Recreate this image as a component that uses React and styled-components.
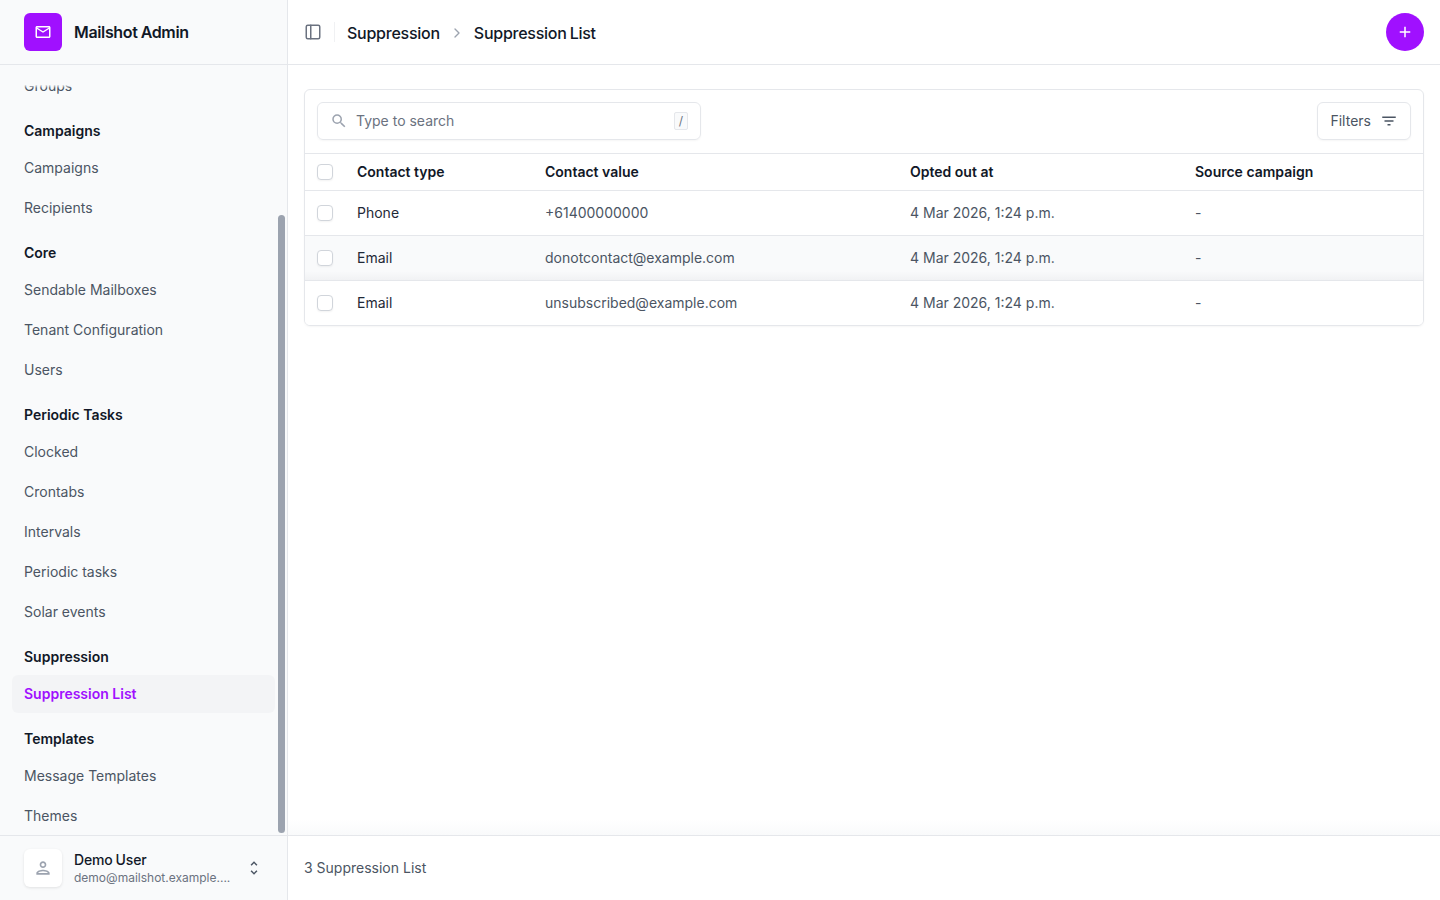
import styled, { createGlobalStyle } from "styled-components"
import { PanelLeft, ChevronRight } from "lucide-react"
import { MdAdd, MdFilterList, MdOutlineMail, MdOutlinePerson, MdSearch, MdUnfoldMore } from "react-icons/md"

const sections = [
  { title: "Campaigns", items: ["Campaigns", "Recipients"] },
  { title: "Core", items: ["Sendable Mailboxes", "Tenant Configuration", "Users"] },
  { title: "Periodic Tasks", items: ["Clocked", "Crontabs", "Intervals", "Periodic tasks", "Solar events"] },
  { title: "Suppression", items: ["Suppression List"] },
  { title: "Templates", items: ["Message Templates", "Themes"] },
]

const rows = [
  { type: "Phone", value: "+61400000000", at: "4 Mar 2026, 1:24 p.m.", source: "-" },
  { type: "Email", value: "donotcontact@example.com", at: "4 Mar 2026, 1:24 p.m.", source: "-", hovered: true },
  { type: "Email", value: "unsubscribed@example.com", at: "4 Mar 2026, 1:24 p.m.", source: "-" },
]

const GlobalStyle = createGlobalStyle`
  * { box-sizing: border-box; }
  html, body { margin: 0; height: 100%; }
  body {
    font-family: Inter, "Liberation Sans", sans-serif;
    font-size: 14px;
    line-height: 20px;
    color: #111827;
    background: #fff;
    overflow: hidden;
  }
`

const Page = styled.div`
  display: flex;
  height: 900px;
`
const Sidebar = styled.aside`
  position: relative;
  width: 288px;
  flex: none;
  display: flex;
  flex-direction: column;
  background: #f9fafb;
  border-right: 1px solid #e5e7eb;
`
const Brand = styled.div`
  height: 65px;
  flex: none;
  display: flex;
  align-items: center;
  gap: 12px;
  padding: 0 24px;
  border-bottom: 1px solid #e5e7eb;
  font-size: 16px;
  line-height: 24px;
  font-weight: 600;
  letter-spacing: -0.35px;
  word-spacing: -0.5px;
`
const LogoBox = styled.div`
  width: 38px;
  height: 38px;
  border-radius: 6px;
  background: #a010ff;
  color: #fff;
  display: flex;
  align-items: center;
  justify-content: center;
`
const NavScroll = styled.nav`
  position: relative;
  flex: 1;
  min-height: 0;
  overflow: hidden;
`
const NavList = styled.div`
  display: flex;
  flex-direction: column;
  gap: 16px;
  padding: 2px 12px 0;
`
const NavSection = styled.div`
  display: flex;
  flex-direction: column;
  gap: 8px;
`
const NavHeading = styled.div`
  padding: 0 12px;
  font-size: 14px;
  font-weight: 600;
  color: #111827;
`
const NavItems = styled.div`
  display: flex;
  flex-direction: column;
  gap: 2px;
`
const NavItem = styled.a`
  height: 38px;
  width: 263px;
  display: flex;
  align-items: center;
  padding: 0 12px;
  border-radius: 6px;
  font-size: 14px;
  color: ${p => (p.$active ? "#a010ff" : "#4b5563")};
  font-weight: ${p => (p.$active ? 600 : 400)};
  background: ${p => (p.$active ? "#f3f4f6" : "transparent")};
`
const TopFade = styled.div`
  position: absolute;
  top: 0;
  left: 0;
  right: 0;
  height: 23px;
  background: linear-gradient(to bottom, #f9fafb 85%, rgba(249, 250, 251, 0));
`
const Thumb = styled.div`
  position: absolute;
  top: 150px;
  right: 2px;
  width: 7px;
  height: 618px;
  border-radius: 4px;
  background: #9ca3af;
`
const UserBar = styled.div`
  height: 65px;
  flex: none;
  display: flex;
  align-items: center;
  gap: 12px;
  padding: 0 24px;
  border-top: 1px solid #e5e7eb;
`
const Avatar = styled.div`
  width: 38px;
  height: 38px;
  flex: none;
  border-radius: 6px;
  background: #fff;
  box-shadow: 0 1px 3px rgba(0, 0, 0, 0.1);
  color: #9ca3af;
  display: flex;
  align-items: center;
  justify-content: center;
`
const UserText = styled.div`
  flex: 1;
  min-width: 0;
`
const UserName = styled.div`
  font-size: 14px;
  line-height: 20px;
  font-weight: 500;
  letter-spacing: -0.15px;
  word-spacing: -0.6px;
  color: #111827;
`
const UserMail = styled.div`
  font-size: 12px;
  line-height: 16px;
  color: #6b7280;
  white-space: nowrap;
`
const Main = styled.main`
  flex: 1;
  min-width: 0;
  display: flex;
  flex-direction: column;
`
const TopBar = styled.header`
  height: 65px;
  flex: none;
  display: flex;
  align-items: center;
  padding: 0 16px;
  border-bottom: 1px solid #e5e7eb;
`
const PanelToggle = styled.div`
  display: flex;
  align-items: center;
  color: #6b7280;
  padding-right: 12px;
  margin-right: 12px;
  border-right: 1px solid #f0f1f3;
  height: 20px;
`
const Crumbs = styled.div`
  display: flex;
  align-items: center;
  gap: 9px;
  padding-top: 2px;
  font-size: 16px;
  line-height: 24px;
  font-weight: 500;
  letter-spacing: -0.25px;
  word-spacing: -1px;
  flex: 1;
  color: #111827;
`
const AddButton = styled.div`
  width: 38px;
  height: 38px;
  border-radius: 50%;
  background: #a010ff;
  color: #fff;
  display: flex;
  align-items: center;
  justify-content: center;
`
const Content = styled.div`
  position: relative;
  flex: 1;
  min-height: 0;
  padding: 24px 16px;
`
const BottomFade = styled.div`
  position: absolute;
  left: 0;
  right: 0;
  bottom: 0;
  height: 16px;
  background: linear-gradient(to bottom, rgba(249, 250, 251, 0), #f9fafb);
`
const Card = styled.section`
  border: 1px solid #e5e7eb;
  border-radius: 6px;
  box-shadow: 0 1px 2px rgba(0, 0, 0, 0.04);
  overflow: hidden;
`
const Toolbar = styled.div`
  display: flex;
  justify-content: space-between;
  align-items: center;
  height: 64px;
  padding: 12px 12px 13px;
  border-bottom: 1px solid #e5e7eb;
`
const SearchBox = styled.div`
  width: 384px;
  height: 38px;
  display: flex;
  align-items: center;
  gap: 8px;
  padding: 0 12px;
  border: 1px solid #e5e7eb;
  border-radius: 6px;
  box-shadow: 0 1px 2px rgba(0, 0, 0, 0.04);
  color: #9ca3af;
`
const Placeholder = styled.span`
  flex: 1;
  color: #6b7280;
  font-size: 14px;
`
const Kbd = styled.span`
  width: 14px;
  height: 18px;
  border: 1px solid #e5e7eb;
  border-radius: 2px;
  background: #f9fafb;
  color: #6b7280;
  font-size: 12px;
  display: flex;
  align-items: center;
  justify-content: center;
`
const FilterButton = styled.div`
  height: 38px;
  display: flex;
  align-items: center;
  gap: 9px;
  padding: 0 12px;
  border: 1px solid #e5e7eb;
  border-radius: 6px;
  box-shadow: 0 1px 2px rgba(0, 0, 0, 0.04);
  color: #4b5563;
  font-size: 14px;
`
const Table = styled.div`
  display: flex;
  flex-direction: column;
`
const Row = styled.div`
  display: grid;
  grid-template-columns: 52px 188px 365px 285px 1fr;
  align-items: center;
  height: ${p => (p.$head ? "36px" : "45px")};
  background: ${p => (p.$hovered ? "linear-gradient(to bottom, #f9fafb 80%, #f1f2f4)" : "#fff")};
  border-top: ${p => (p.$first ? "none" : "1px solid #e5e7eb")};
`
const CheckCell = styled.div`
  padding-left: 12px;
  display: flex;
`
const Check = styled.span`
  width: 16px;
  height: 16px;
  background: #fff;
  border: 1px solid #d1d5db;
  border-radius: 4px;
  box-shadow: 0 1px 2px rgba(0, 0, 0, 0.05);
`
const HeadCell = styled.div`
  font-weight: 600;
  color: #111827;
  font-size: 14px;
`
const Cell = styled.div`
  font-size: 14px;
  color: ${p => (p.$strong ? "#1f2937" : "#4b5563")};
`
const Footer = styled.footer`
  height: 65px;
  flex: none;
  display: flex;
  align-items: center;
  padding: 0 16px;
  border-top: 1px solid #e5e7eb;
  font-size: 14px;
  color: #4b5563;
`

const App = () => {
  return (
    <Page>
      <GlobalStyle />
      <Sidebar>
        <Brand>
          <LogoBox><MdOutlineMail size={18} /></LogoBox>
          Mailshot Admin
        </Brand>
        <NavScroll>
          <NavList>
            <NavItems>
              <NavItem>Groups</NavItem>
            </NavItems>
            {sections.map(section => (
              <NavSection key={section.title}>
                <NavHeading>{section.title}</NavHeading>
                <NavItems>
                  {section.items.map(item => (
                    <NavItem key={item} $active={item === "Suppression List"}>{item}</NavItem>
                  ))}
                </NavItems>
              </NavSection>
            ))}
          </NavList>
          <TopFade />
          <Thumb />
        </NavScroll>
        <UserBar>
          <Avatar><MdOutlinePerson size={20} /></Avatar>
          <UserText>
            <UserName>Demo User</UserName>
            <UserMail>demo@mailshot.example....</UserMail>
          </UserText>
          <MdUnfoldMore size={18} color="#4b5563" />
        </UserBar>
      </Sidebar>
      <Main>
        <TopBar>
          <PanelToggle><PanelLeft size={18} strokeWidth={2} /></PanelToggle>
          <Crumbs>
            Suppression
            <ChevronRight size={16} color="#9ca3af" />
            Suppression List
          </Crumbs>
          <AddButton><MdAdd size={18} /></AddButton>
        </TopBar>
        <Content>
          <Card>
            <Toolbar>
              <SearchBox>
                <MdSearch size={18} />
                <Placeholder>Type to search</Placeholder>
                <Kbd>/</Kbd>
              </SearchBox>
              <FilterButton>Filters <MdFilterList size={18} color="#4b5563" /></FilterButton>
            </Toolbar>
            <Table>
              <Row $head $first>
                <CheckCell><Check /></CheckCell>
                <HeadCell>Contact type</HeadCell>
                <HeadCell>Contact value</HeadCell>
                <HeadCell>Opted out at</HeadCell>
                <HeadCell>Source campaign</HeadCell>
              </Row>
              {rows.map(row => (
                <Row key={row.value} $hovered={row.hovered}>
                  <CheckCell><Check /></CheckCell>
                  <Cell $strong>{row.type}</Cell>
                  <Cell>{row.value}</Cell>
                  <Cell>{row.at}</Cell>
                  <Cell>{row.source}</Cell>
                </Row>
              ))}
            </Table>
          </Card>
          <BottomFade />
        </Content>
        <Footer>3 Suppression List</Footer>
      </Main>
    </Page>
  )
}

export default App
